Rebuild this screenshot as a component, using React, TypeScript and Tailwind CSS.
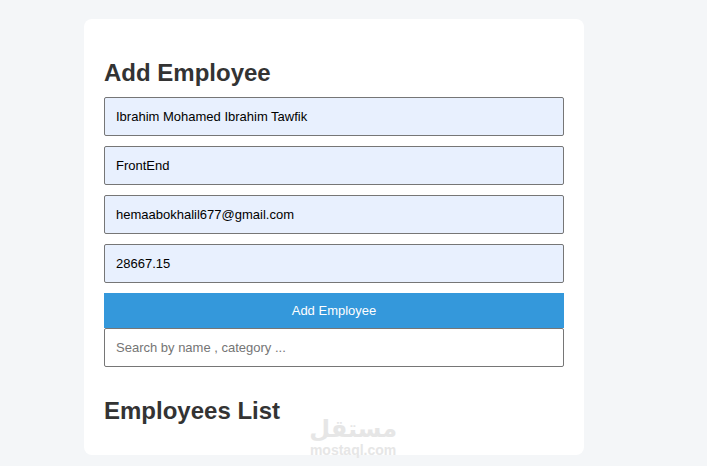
import { useState } from "react";

const fields = [
  { id: "name", label: "Name", type: "text", value: "Ibrahim Mohamed Ibrahim Tawfik" },
  { id: "category", label: "Category", type: "text", value: "FrontEnd" },
  { id: "email", label: "Email", type: "email", value: "hemaabokhalil677@gmail.com" },
  { id: "salary", label: "Salary", type: "text", value: "28667.15" },
];

const inputClass =
  "block w-full px-[11px] py-[9px] rounded-[2px] border border-[#767676] text-[13px] leading-[19px] text-black placeholder:text-[#757575]";

function Watermark() {
  return (
    <div
      aria-hidden="true"
      className="pointer-events-none absolute right-[187px] -bottom-1 flex flex-col items-center font-bold text-[#e6e6e6]"
    >
      <span
        dir="rtl"
        className="text-[24px] leading-[24px] font-['DejaVu_Sans',sans-serif]"
      >
        مستقل
      </span>
      <span className="text-[14px] leading-[18px]">mostaql.com</span>
    </div>
  );
}

export default function App() {
  const [values, setValues] = useState<Record<string, string>>(
    Object.fromEntries(fields.map((f) => [f.id, f.value]))
  );
  const [search, setSearch] = useState("");

  return (
    <div className="min-h-screen bg-[#f4f6f8] pt-[19px] pr-[39px] pb-[11px] font-['Liberation_Sans',Arial,sans-serif] text-[#333333]">
      <main className="relative mx-auto max-w-[500px] rounded-[8px] bg-white px-5 pt-10 pb-[30px]">
        <h2 className="mb-[10px] text-[24px] leading-[28px] font-bold">Add Employee</h2>

        <form onSubmit={(e) => e.preventDefault()} className="flex flex-col gap-[10px]">
          {fields.map((field) => (
            <input
              key={field.id}
              id={field.id}
              type={field.type}
              aria-label={field.label}
              value={values[field.id]}
              onChange={(e) => setValues({ ...values, [field.id]: e.target.value })}
              className={`${inputClass} bg-[#e8f0fe]`}
            />
          ))}
          <button
            type="submit"
            className="h-[35px] w-full cursor-pointer bg-[#3498db] text-[13px] leading-[19px] text-white"
          >
            Add Employee
          </button>
        </form>

        <input
          id="search"
          type="text"
          aria-label="Search employees"
          value={search}
          onChange={(e) => setSearch(e.target.value)}
          placeholder="Search by name , category ..."
          className={`${inputClass} bg-white`}
        />

        <h2 className="mt-[30px] text-[24px] leading-[28px] font-bold">Employees List</h2>

        <Watermark />
      </main>
    </div>
  );
}
